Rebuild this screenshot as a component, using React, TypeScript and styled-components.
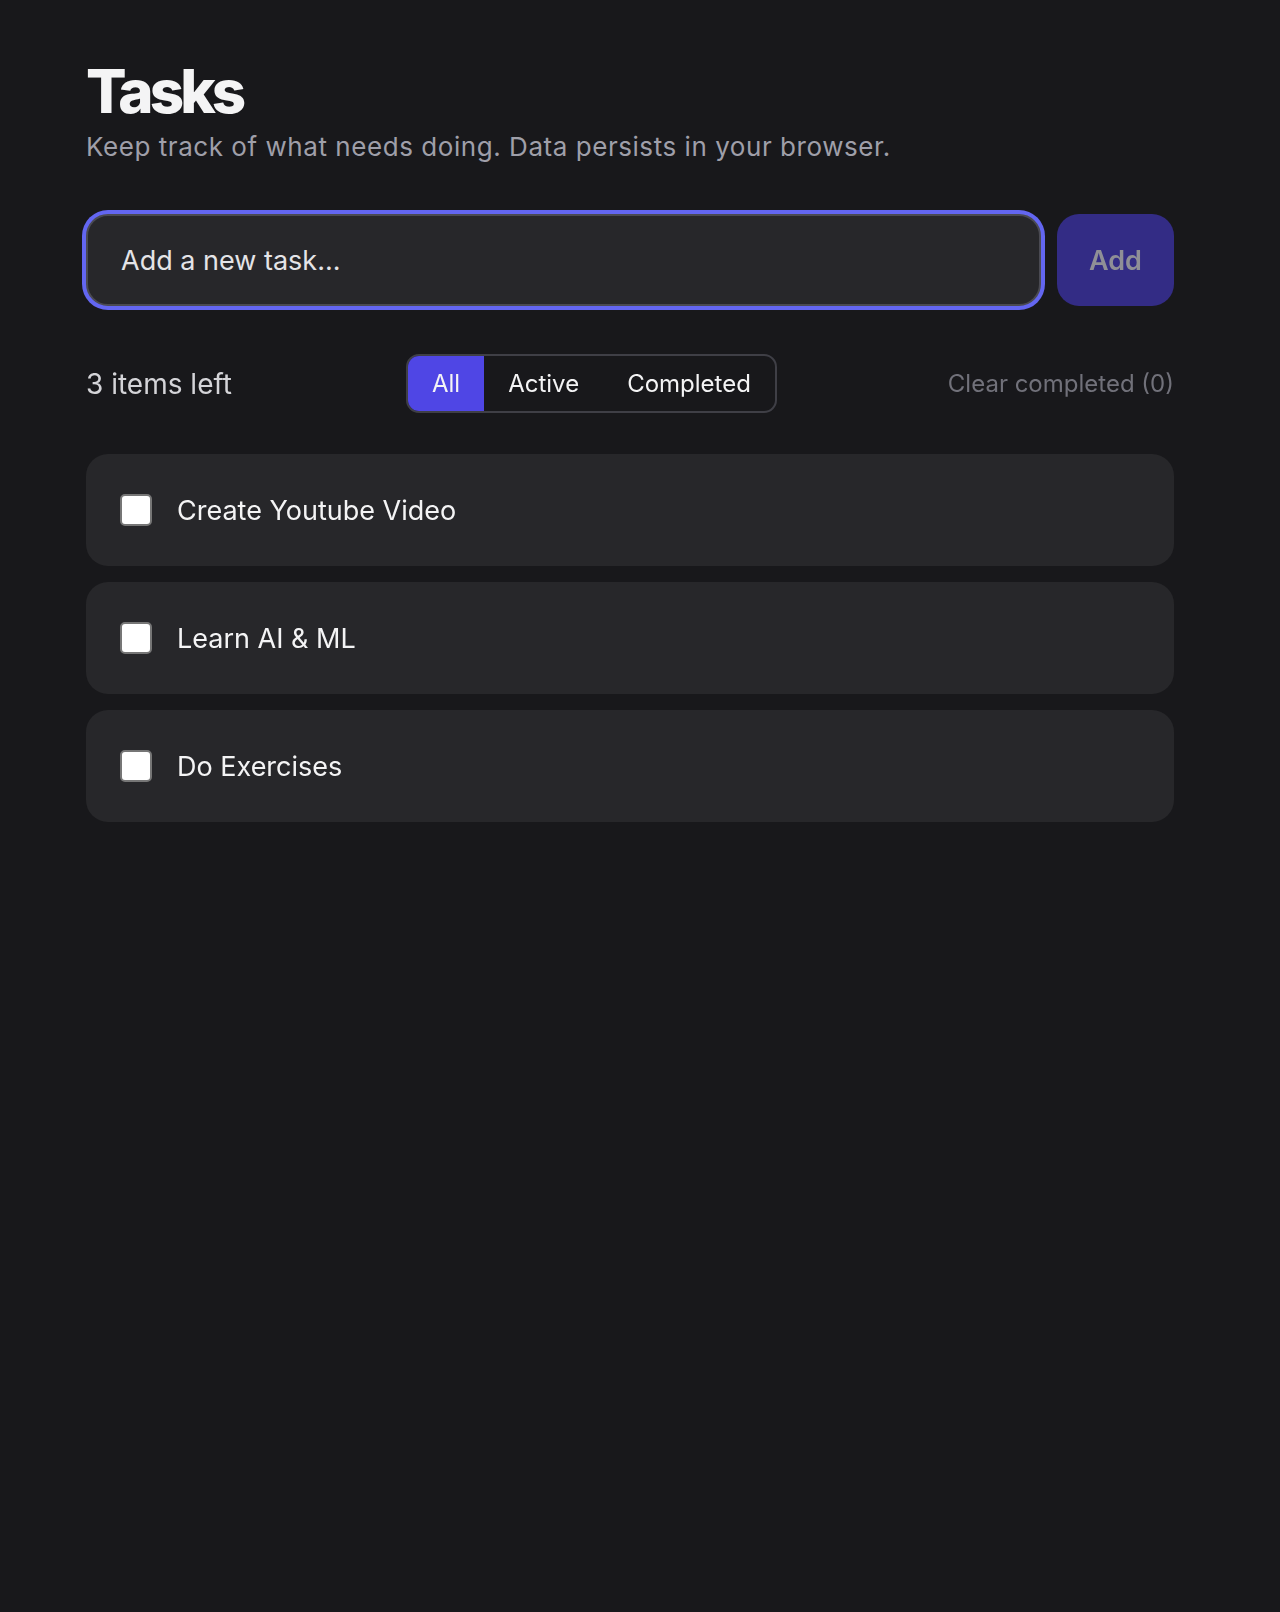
import React, { useState } from "react";
import styled, { createGlobalStyle } from "styled-components";

const Global = createGlobalStyle`
  html, body {
    margin: 0;
    padding: 0;
    background: #18181b;
  }
  body {
    font-family: Inter, "Noto Sans", "Liberation Sans", sans-serif;
    color: #f4f4f5;
    min-height: 1612px;
  }
  * { box-sizing: border-box; }
`;

const Page = styled.main`
  padding: 61px 0 0 86px;
  min-height: 1612px;
  background: #18181b;
`;

const Container = styled.div`
  width: 1088px;
  display: flex;
  flex-direction: column;
`;

const Title = styled.h1`
  margin: 0;
  font-size: 60px;
  line-height: 60px;
  font-weight: 800;
  letter-spacing: -0.065em;
  color: #f4f4f5;
`;

const Subtitle = styled.p`
  margin: 10px 0 0;
  font-size: 26px;
  line-height: 32px;
  letter-spacing: 0.55px;
  color: #9f9fa9;
`;

const Form = styled.form`
  margin-top: 51px;
  display: flex;
  gap: 16px;
`;

const Input = styled.input`
  flex: 1;
  height: 92px;
  border-radius: 22px;
  border: 2px solid #4a4a52;
  background: #27272a;
  color: #f4f4f5;
  caret-color: #f4f4f5;
  font-family: inherit;
  font-size: 27px;
  padding: 0 33px;
  outline: none;
  box-shadow: 0 0 0 4px #6366f1;
  &::placeholder {
    color: #e4e4e7;
    opacity: 1;
  }
`;

const AddButton = styled.button`
  width: 117px;
  height: 92px;
  border: none;
  border-radius: 22px;
  background: #332c85;
  color: #8f8f96;
  font-family: inherit;
  font-size: 27px;
  font-weight: 600;
  cursor: not-allowed;
`;

const Toolbar = styled.div`
  margin-top: 48px;
  display: flex;
  align-items: center;
`;

const Count = styled.span`
  flex: 0 0 320px;
  font-size: 28px;
  color: #d4d4d8;
`;

const Segmented = styled.div`
  display: flex;
  height: 59px;
  border: 2px solid #3f3f46;
  border-radius: 13px;
  overflow: hidden;
`;

const Segment = styled.button<{ $active?: boolean }>`
  border: none;
  padding: 0 24px;
  background: ${(p) => (p.$active ? "#4f46e5" : "transparent")};
  color: #f4f4f5;
  font-family: inherit;
  font-size: 24px;
  cursor: pointer;
`;

const Clear = styled.button`
  margin-left: auto;
  border: none;
  background: none;
  padding: 0;
  color: #71717a;
  font-family: inherit;
  font-size: 24px;
`;

const List = styled.ul`
  list-style: none;
  margin: 41px 0 0;
  padding: 0;
  display: flex;
  flex-direction: column;
  gap: 16px;
`;

const Card = styled.li`
  height: 112px;
  border-radius: 22px;
  background: #27272a;
  display: flex;
  align-items: center;
  gap: 25px;
  padding: 0 34px;
`;

const Check = styled.input`
  appearance: none;
  margin: 0;
  width: 32px;
  height: 32px;
  border: 2px solid #767676;
  border-radius: 5px;
  background: #ffffff;
`;

const Label = styled.span`
  font-size: 27px;
  color: #f4f4f5;
`;

const tasks = ["Create Youtube Video", "Learn AI & ML", "Do Exercises"];

export default function App() {
  const [filter, setFilter] = useState("All");
  return (
    <>
      <Global />
      <Page>
        <Container>
          <Title>Tasks</Title>
          <Subtitle>Keep track of what needs doing. Data persists in your browser.</Subtitle>
          <Form onSubmit={(e) => e.preventDefault()}>
            <Input placeholder="Add a new task..." autoFocus />
            <AddButton type="submit">Add</AddButton>
          </Form>
          <Toolbar>
            <Count>3 items left</Count>
            <Segmented>
              {["All", "Active", "Completed"].map((f) => (
                <Segment key={f} $active={filter === f} onClick={() => setFilter(f)}>
                  {f}
                </Segment>
              ))}
            </Segmented>
            <Clear>Clear completed (0)</Clear>
          </Toolbar>
          <List>
            {tasks.map((t) => (
              <Card key={t}>
                <Check type="checkbox" />
                <Label>{t}</Label>
              </Card>
            ))}
          </List>
        </Container>
      </Page>
    </>
  );
}
